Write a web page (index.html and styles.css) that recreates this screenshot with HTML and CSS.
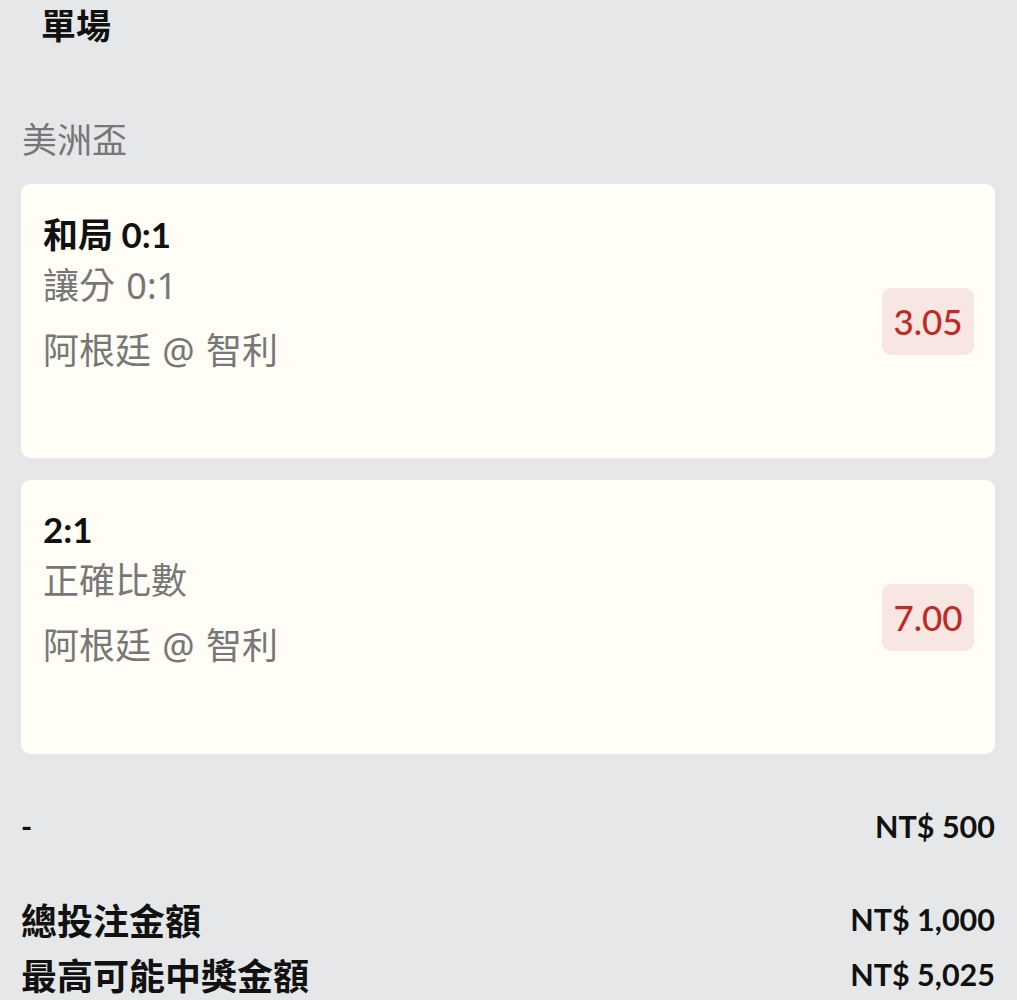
FILE: index.html
```html
<!DOCTYPE html>
<html lang="zh-Hant">
<head>
<meta charset="utf-8">
<link rel="stylesheet" href="styles.css">
</head>
<body>
<div class="page">
  <h1 class="heading">單場</h1>
  <div class="league">美洲盃</div>
  <div class="card">
    <div class="info">
      <div class="pick"><span class="cjk">和局</span> 0:1</div>
      <div class="market">讓分 0:1</div>
      <div class="match">阿根廷 @ 智利</div>
    </div>
    <div class="odds">3.05</div>
  </div>
  <div class="card">
    <div class="info">
      <div class="pick">2:1</div>
      <div class="market">正確比數</div>
      <div class="match">阿根廷 @ 智利</div>
    </div>
    <div class="odds">7.00</div>
  </div>
  <div class="row stake">
    <span class="dash">-</span>
    <span class="amount">NT$ 500</span>
  </div>
  <div class="totals">
    <div class="row">
      <span class="label">總投注金額</span>
      <span class="amount">NT$ 1,000</span>
    </div>
    <div class="row">
      <span class="label">最高可能中獎金額</span>
      <span class="amount">NT$ 5,025</span>
    </div>
  </div>
</div>
</body>
</html>
```
FILE: styles.css
```css
html, body {
  margin: 0;
  padding: 0;
}
body {
  background: #e6e7e9;
  font-family: Lato, "Noto Sans CJK TC", sans-serif;
  color: #111;
}
.page {
  padding: 0 22px 0 21px;
  display: flex;
  flex-direction: column;
}
.heading {
  margin: 0;
  padding: 4px 0 0 20px;
  font-family: "Noto Sans CJK TC", sans-serif;
  font-size: 35px;
  line-height: 40px;
  font-weight: 700;
}
.league {
  margin-top: 74px;
  font-family: "Noto Sans CJK TC", sans-serif;
  font-size: 35px;
  line-height: 40px;
  color: #777;
  padding-left: 1px;
}
.card {
  margin-top: 26px;
  height: 274px;
  box-sizing: border-box;
  background: #fffdf5;
  border-radius: 9px;
  padding: 27px 21px 0 22px;
  display: flex;
  justify-content: space-between;
  align-items: flex-start;
}
.card + .card {
  margin-top: 22px;
}
.pick {
  font-size: 35px;
  font-weight: 700;
  line-height: 44px;
}
.cjk {
  font-family: "Noto Sans CJK TC", sans-serif;
  font-size: 35px;
}
.market, .match {
  font-family: "Noto Sans", "Noto Sans CJK TC", sans-serif;
  font-size: 36px;
  color: #777;
  line-height: 44px;
  word-spacing: 2px;
}
.market {
  margin-top: 8px;
}
.match {
  margin-top: 21px;
}
.odds {
  align-self: center;
  margin-top: -27px;
  background: #f7e6e1;
  color: #bf2a24;
  font-size: 35px;
  font-weight: 500;
  border-radius: 9px;
  width: 92px;
  height: 67px;
  display: flex;
  align-items: center;
  justify-content: center;
}
.row {
  display: flex;
  justify-content: space-between;
  align-items: center;
  font-weight: 700;
  height: 44px;
}
.stake {
  margin-top: 50px;
}
.dash {
  font-size: 30px;
}
.amount {
  font-size: 30.5px;
}
.label {
  font-family: "Noto Sans CJK TC", sans-serif;
  font-size: 36px;
}
.totals {
  margin-top: 49px;
  display: flex;
  flex-direction: column;
  gap: 11px;
}
```
